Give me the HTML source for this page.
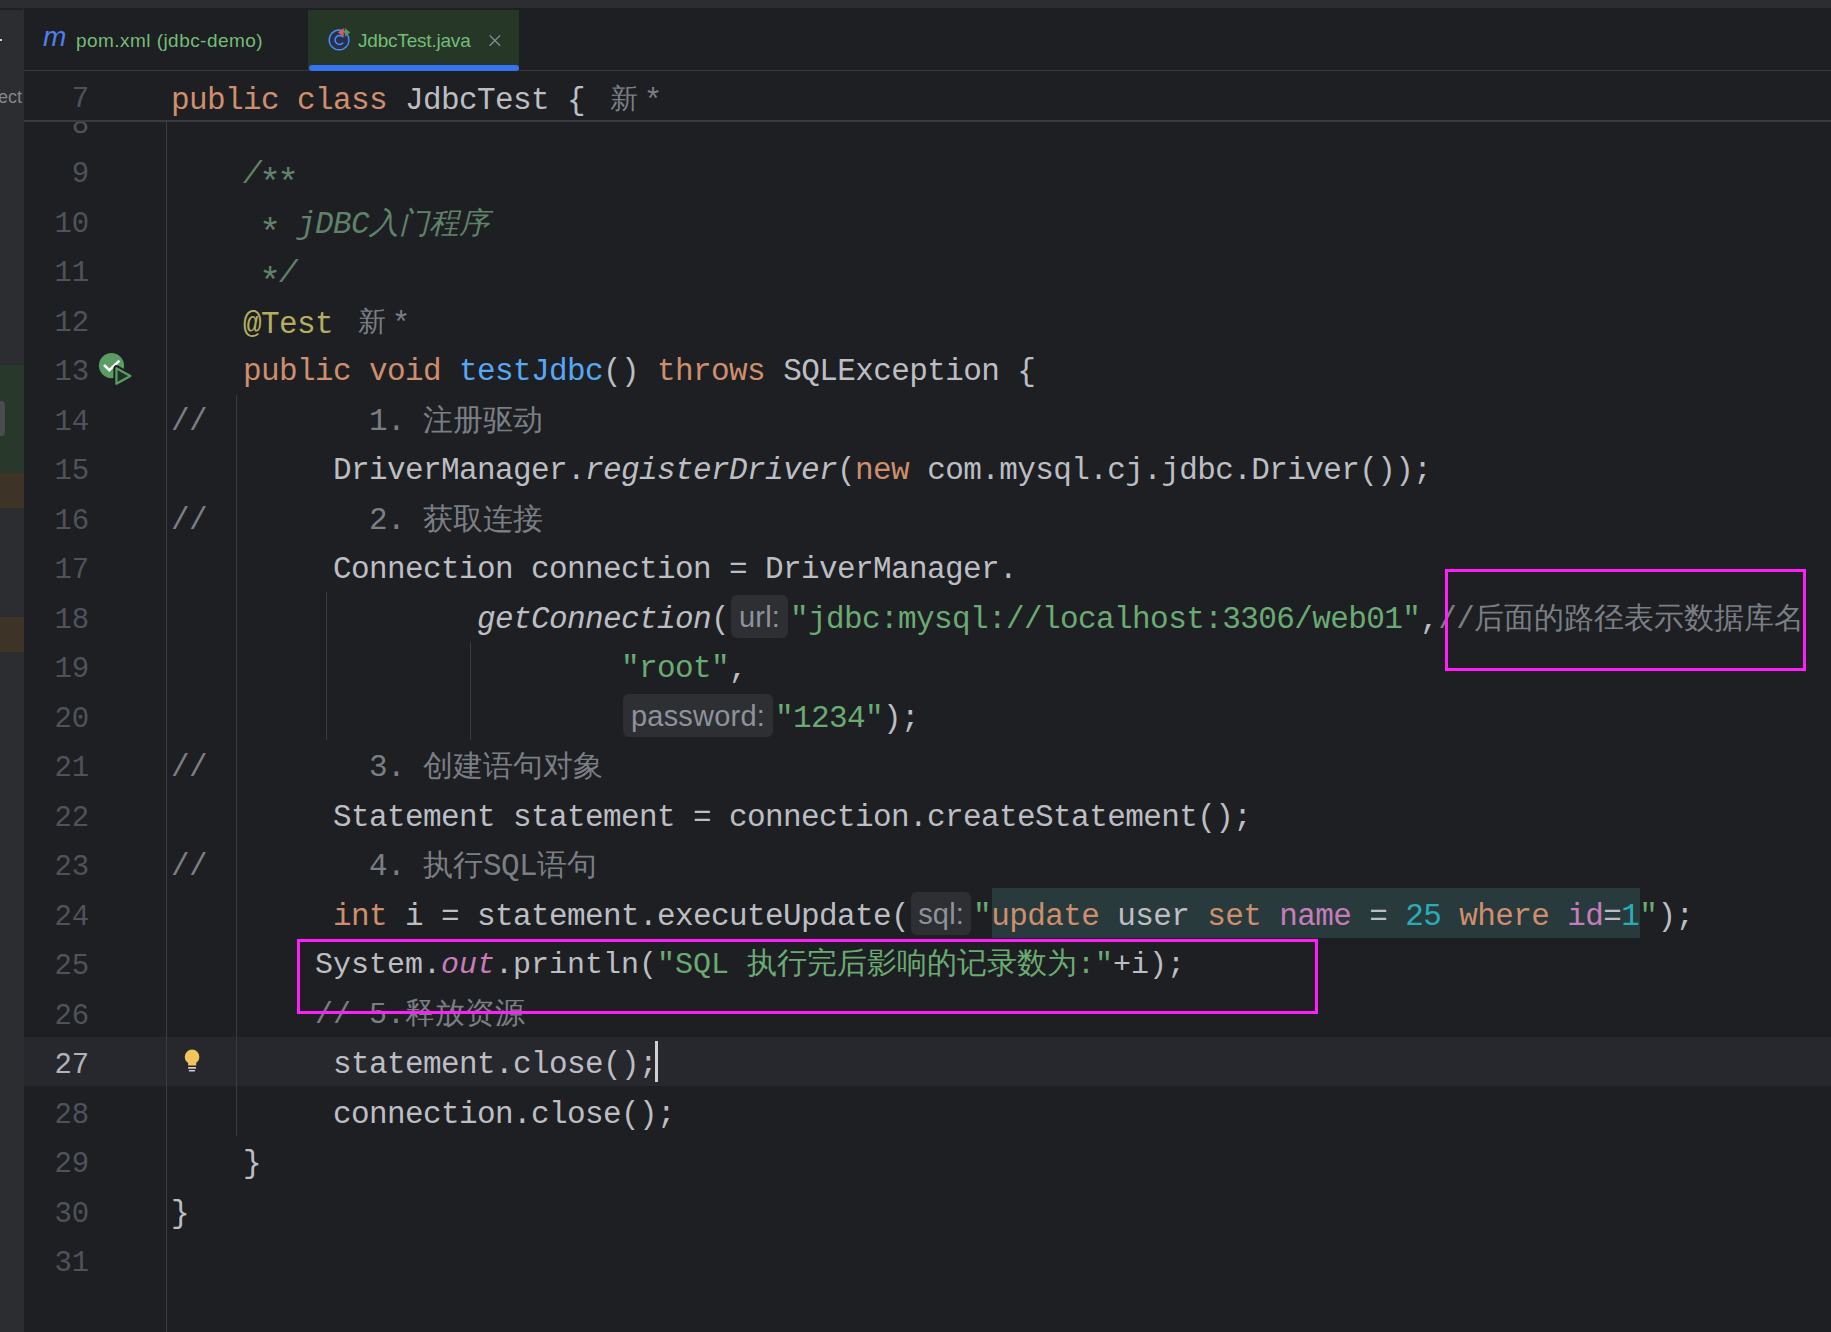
<!DOCTYPE html>
<html><head><meta charset="utf-8">
<style>
*{margin:0;padding:0;box-sizing:border-box}
html,body{width:1831px;height:1332px;overflow:hidden;background:#1E1F22;position:relative}
.a{position:absolute}
.topstrip{left:0;top:0;width:1831px;height:8px;background:#2B2D30}
.leftstrip{left:0;top:8px;width:24px;height:1324px;background:#2B2D30}
.tabline{left:24px;top:70px;width:1807px;height:2px;background:#34363A}
.sel{left:308px;top:10px;width:211px;height:60px;background:#263627}
.uline{left:309px;top:65px;width:210px;height:6px;background:#3574F0;border-radius:3px}
.ui{font-family:"Liberation Sans",sans-serif;font-size:19px;color:#73BD79;white-space:pre;line-height:24px}
.code{font-family:"Liberation Mono",monospace;font-size:31px;letter-spacing:-0.6px;white-space:pre;color:#BCBEC4;line-height:49.5px;height:49.5px}
.ln{font-family:"Liberation Mono",monospace;font-size:29px;letter-spacing:-0.2px;white-space:pre;color:#4E535B;line-height:49.5px;height:49.5px;width:70px;text-align:right;left:19px;margin-top:1px}
.cur{color:#B0B3BA}
.z{font-size:30px;letter-spacing:0px;font-weight:300}
.sticky{left:24px;top:71px;width:1807px;height:50px;background:#1E1F22}
.stickyline{left:24px;top:120px;width:1807px;height:2px;background:#393B40}
.gdiv{left:166px;top:122px;width:1px;height:1210px;background:#393C40}
.guide{width:1px;background:#393B40}
.caretrow{left:24px;top:1037px;width:1807px;height:49px;background:#26282E}
.k{color:#CF8E6D}.s{color:#6AAB73}.n{color:#2AACB8}.c{color:#7A7E85}.d{color:#5F826B;font-style:italic}
.an{color:#B3AE60}.m{color:#56A8F5}.it{font-style:italic}.f{color:#C77DBB;font-style:italic}.p{color:#C77DBB}
.hint{display:inline-block;position:relative;top:0px;font-family:"Liberation Sans",sans-serif;font-size:29px;letter-spacing:0.2px;color:#8D929B;background:#2D2F33;border-radius:6px;height:43px;line-height:45px;vertical-align:top;margin:0 2px 0 2px;text-align:center}
.auth{font-family:"Liberation Sans",sans-serif;font-size:28px;letter-spacing:0;color:#7A7E85;margin-left:25px;position:relative;top:-1.5px}
.ast{margin-left:9px;font-size:31px;position:relative;top:1px}
.inj{}
.caret{display:inline-block;width:2px;height:38px;background:#CED0D6;vertical-align:middle}
.paste{font-size:30px;letter-spacing:0px}
.box{border:3px solid #FF1FFA}
.st{font-size:37px;letter-spacing:-4.2px;font-style:normal;position:relative;top:11px;left:-2px}
</style></head><body>
<div class="a topstrip"></div>
<div class="a leftstrip"></div>
<div class="a" style="left:0;top:365px;width:24px;height:108px;background:#28382A"></div>
<div class="a" style="left:0;top:473px;width:24px;height:35px;background:#3D3326"></div>
<div class="a" style="left:0;top:617px;width:24px;height:35px;background:#3D3326"></div>
<div class="a" style="left:-6px;top:401px;width:11px;height:35px;background:#4A4C50;border-radius:4px"></div>
<div class="a ui" style="left:-2px;top:85px;color:#84878C;font-size:18px">ect</div>
<div class="a" style="left:0;top:39px;width:2px;height:2px;background:#CED0D6"></div>
<div class="a" style="left:0;top:8px;width:23px;height:2px;background:#1F2023"></div>

<div class="a tabline"></div>
<div class="a sel"></div>
<div class="a uline"></div>
<div class="a ui" style="left:43px;top:25px;color:#4D80EA;font-style:italic;font-size:28px">m</div>
<div class="a ui" style="left:76px;top:29px;letter-spacing:0.45px">pom.xml (jdbc-demo)</div>
<svg class="a" style="left:326px;top:26px" width="28" height="28" viewBox="0 0 28 28">
  <circle cx="13.1" cy="13.9" r="9.9" fill="#25324D" stroke="#548AF7" stroke-width="1.4"/>
  <path d="M17.2 11.2 A4.5 4.5 0 1 0 17.2 16.6" fill="none" stroke="#548AF7" stroke-width="1.5"/>
  <path d="M17.7 2 L17.7 10.8 L12 6.4 Z" fill="#DB5C5C"/>
  <path d="M18.9 2 L18.9 10.8 L24.2 6.4 Z" fill="#57965C"/>
</svg>
<div class="a ui" style="left:358px;top:29px;letter-spacing:-0.2px">JdbcTest.java</div>
<svg class="a" style="left:488px;top:34px" width="14" height="14" viewBox="0 0 14 14"><path d="M1.6 1.4 L12.2 11.8 M12.2 1.4 L1.6 11.8" stroke="#8C8F94" stroke-width="1.3"/></svg>

<div class="a caretrow"></div>
<div class="a" style="left:992px;top:888px;width:648px;height:50px;background:#293A3C"></div>
<div class="a gdiv"></div>
<div class="a guide" style="left:236px;top:395px;height:741px"></div>
<div class="a guide" style="left:326px;top:592px;height:148px"></div>
<div class="a guide" style="left:470px;top:642px;height:98px"></div>

<div class="a ln" style="top:99.50px">8</div>
<div class="a ln" style="top:149.00px">9</div>
<div class="a ln" style="top:198.50px">10</div>
<div class="a ln" style="top:248.00px">11</div>
<div class="a ln" style="top:297.50px">12</div>
<div class="a ln" style="top:347.00px">13</div>
<div class="a ln" style="top:396.50px">14</div>
<div class="a ln" style="top:446.00px">15</div>
<div class="a ln" style="top:495.50px">16</div>
<div class="a ln" style="top:545.00px">17</div>
<div class="a ln" style="top:594.50px">18</div>
<div class="a ln" style="top:644.00px">19</div>
<div class="a ln" style="top:693.50px">20</div>
<div class="a ln" style="top:743.00px">21</div>
<div class="a ln" style="top:792.50px">22</div>
<div class="a ln" style="top:842.00px">23</div>
<div class="a ln" style="top:891.50px">24</div>
<div class="a ln" style="top:941.00px">25</div>
<div class="a ln" style="top:990.50px">26</div>
<div class="a ln cur" style="top:1040.00px">27</div>
<div class="a ln" style="top:1089.50px">28</div>
<div class="a ln" style="top:1139.00px">29</div>
<div class="a ln" style="top:1188.50px">30</div>
<div class="a ln" style="top:1238.00px">31</div>
<div class="a code" style="top:149.00px;left:243.00px"><span class="d">/<span class="st">*</span><span class="st">*</span></span></div>
<div class="a code" style="top:198.50px;left:261.00px"><span class="d"><span class="st">*</span> jDBC<span class="z">入门程序</span></span></div>
<div class="a code" style="top:248.00px;left:261.00px"><span class="d"><span class="st">*</span>/</span></div>
<div class="a code" style="top:297.50px;left:243.00px"><span class="an">@Test</span><span class="auth">新<span class="ast">*</span></span></div>
<div class="a code" style="top:347.00px;left:243.00px"><span class="k">public void </span><span class="m">testJdbc</span>() <span class="k">throws</span> SQLException {</div>
<div class="a code" style="top:396.50px;left:171.00px"><span class="c">//         1. <span class="z">注册驱动</span></span></div>
<div class="a code" style="top:446.00px;left:333.00px">DriverManager.<span class="it">registerDriver</span>(<span class="k">new</span> com.mysql.cj.jdbc.Driver());</div>
<div class="a code" style="top:495.50px;left:171.00px"><span class="c">//         2. <span class="z">获取连接</span></span></div>
<div class="a code" style="top:545.00px;left:333.00px">Connection connection = DriverManager.</div>
<div class="a code" style="top:594.50px;left:477.00px"><span class="it">getConnection</span>(<span class="hint" style="width:57px">url:</span><span class="s">&quot;jdbc:mysql://localhost:3306/web01&quot;</span>,<span class="c">//<span class="z">后面的路径表示数据库名</span></span></div>
<div class="a code" style="top:644.00px;left:621.00px"><span class="s">&quot;root&quot;</span>,</div>
<div class="a code" style="top:693.50px;left:621.00px"><span class="hint" style="width:150px">password:</span><span class="s">&quot;1234&quot;</span>);</div>
<div class="a code" style="top:743.00px;left:171.00px"><span class="c">//         3. <span class="z">创建语句对象</span></span></div>
<div class="a code" style="top:792.50px;left:333.00px">Statement statement = connection.createStatement();</div>
<div class="a code" style="top:842.00px;left:171.00px"><span class="c">//         4. <span class="z">执行</span>SQL<span class="z">语句</span></span></div>
<div class="a code" style="top:891.50px;left:333.00px"><span class="k">int</span> i = statement.executeUpdate(<span class="hint" style="width:60px">sql:</span><span class="s">&quot;</span><span class="inj"><span class="k">update</span> user <span class="k">set</span> <span class="p">name</span> = <span class="n">25</span> <span class="k">where</span> <span class="p">id</span>=<span class="n">1</span></span><span class="s">&quot;</span>);</div>
<div class="a code" style="top:1040.00px;left:333.00px">statement.close();</div>
<div class="a code" style="top:1089.50px;left:333.00px">connection.close();</div>
<div class="a code" style="top:1139.00px;left:243.00px">}</div>
<div class="a code" style="top:1188.50px;left:171.00px">}</div>
<div class="a code paste" style="top:941.00px;left:315px">System.<span class="f">out</span>.println(<span class="s">"SQL <span class="z">执行完后影响的记录数为</span>:"</span>+i);</div>
<div class="a code paste c" style="top:990.50px;left:315px">// 5.<span class="z">释放资源</span></div>

<div class="a sticky"></div>
<div class="a stickyline"></div>
<div class="a code" style="top:74px;left:171px"><span class="k">public class</span> JdbcTest {<span class="auth">新<span class="ast">*</span></span></div>
<div class="a ln" style="top:74px">7</div>

<svg class="a" style="left:90px;top:340px" width="60" height="55" viewBox="0 0 60 55">
  <circle cx="21.5" cy="25.6" r="12.6" fill="#5A9C64"/>
  <path d="M14 24.8 L19.3 30.2 L29.4 20.6" fill="none" stroke="#FFFFFF" stroke-width="2.6"/>
  <path d="M26.4 28.2 L26.4 43.8 L40.4 36 Z" fill="#1E1F22" stroke="#1E1F22" stroke-width="6" stroke-linejoin="round"/>
  <path d="M26.4 28.2 L26.4 43.8 L40.4 36 Z" fill="#213222" stroke="#5A9C64" stroke-width="2.2" stroke-linejoin="round"/>
</svg>
<svg class="a" style="left:182px;top:1048px" width="20" height="26" viewBox="0 0 20 26">
  <circle cx="10.05" cy="8.9" r="7.3" fill="#F2C55C"/>
  <rect x="6.1" y="11" width="8.1" height="6.5" fill="#F2C55C"/>
  <rect x="6.1" y="18.9" width="7.9" height="1.9" rx="0.5" fill="#CED0D6"/>
  <path d="M6.8 21.9 L13.1 21.9 L13.1 22.6 Q13.1 23.5 12.2 23.5 L7.7 23.5 Q6.8 23.5 6.8 22.6 Z" fill="#CED0D6"/>
</svg>

<div class="a" style="left:655px;top:1041px;width:3px;height:41px;background:#CED0D6"></div>
<div class="a box" style="left:1445px;top:569px;width:361px;height:102px"></div>
<div class="a box" style="left:297px;top:939px;width:1021px;height:75px"></div>
</body></html>
